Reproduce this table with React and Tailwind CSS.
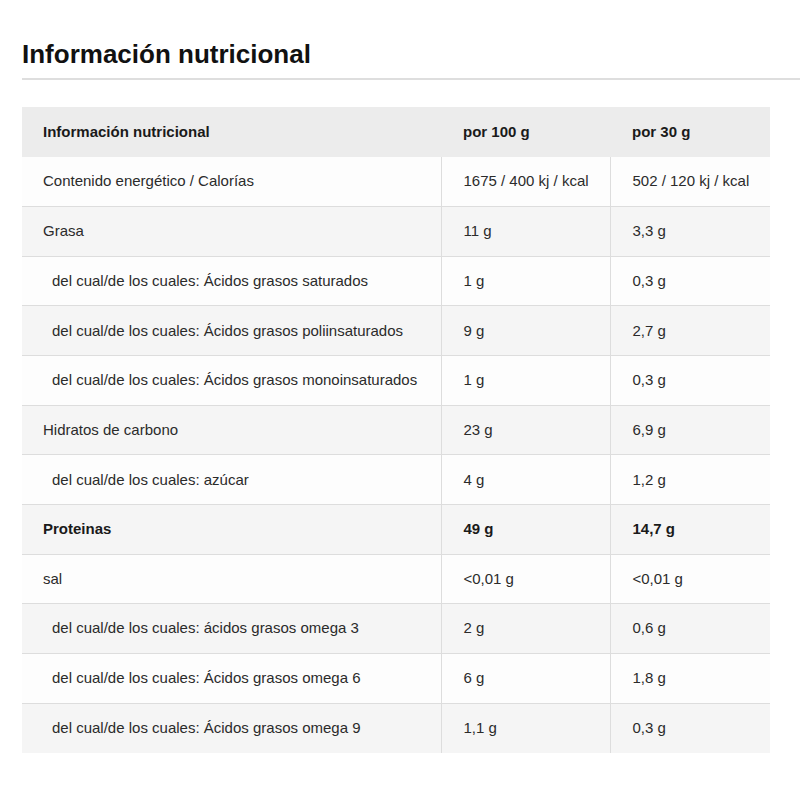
const rows = [
  { name: "Contenido energético / Calorías", a: "1675 / 400 kj / kcal", b: "502 / 120 kj / kcal" },
  { name: "Grasa", a: "11 g", b: "3,3 g" },
  { name: "del cual/de los cuales: Ácidos grasos saturados", a: "1 g", b: "0,3 g", sub: true },
  { name: "del cual/de los cuales: Ácidos grasos poliinsaturados", a: "9 g", b: "2,7 g", sub: true },
  { name: "del cual/de los cuales: Ácidos grasos monoinsaturados", a: "1 g", b: "0,3 g", sub: true },
  { name: "Hidratos de carbono", a: "23 g", b: "6,9 g" },
  { name: "del cual/de los cuales: azúcar", a: "4 g", b: "1,2 g", sub: true },
  { name: "Proteinas", a: "49 g", b: "14,7 g", bold: true },
  { name: "sal", a: "<0,01 g", b: "<0,01 g" },
  { name: "del cual/de los cuales: ácidos grasos omega 3", a: "2 g", b: "0,6 g", sub: true },
  { name: "del cual/de los cuales: Ácidos grasos omega 6", a: "6 g", b: "1,8 g", sub: true },
  { name: "del cual/de los cuales: Ácidos grasos omega 9", a: "1,1 g", b: "0,3 g", sub: true },
]

export default function App() {
  return (
    <div className="min-h-[800px] bg-white pt-[37px] pl-[22px] font-['Liberation_Sans',Arial,sans-serif] text-[#2b2b2b]">
      <h2 className="text-[26px] font-bold leading-[34px] text-[#111]">Información nutricional</h2>
      <div className="mt-[7px] h-[2px] bg-[#dedede]" />
      <table className="mt-[27px] w-[748px] border-collapse text-[15px]">
        <thead>
          <tr className="h-[50px] bg-[#ececec] text-left font-bold text-[#1a1a1a]">
            <th className="w-[419px] pl-[21px]">Información nutricional</th>
            <th className="w-[169px] pl-[22px]">por 100 g</th>
            <th className="pl-[22px]">por 30 g</th>
          </tr>
        </thead>
        <tbody>
          {rows.map((r, i) => (
            <tr
              key={i}
              className={`h-[49.67px] border-b border-[#dddddd] last:border-b-0 ${i % 2 ? "bg-[#f5f5f5]" : "bg-[#fdfdfd]"} ${r.bold ? "font-bold text-[#1a1a1a]" : ""}`}
            >
              <td className={r.sub ? "pl-[30px]" : "pl-[21px]"}>{r.name}</td>
              <td className="border-l border-[#dddddd] pl-[22px]">{r.a}</td>
              <td className="border-l border-[#dddddd] pl-[22px]">{r.b}</td>
            </tr>
          ))}
        </tbody>
      </table>
    </div>
  )
}
